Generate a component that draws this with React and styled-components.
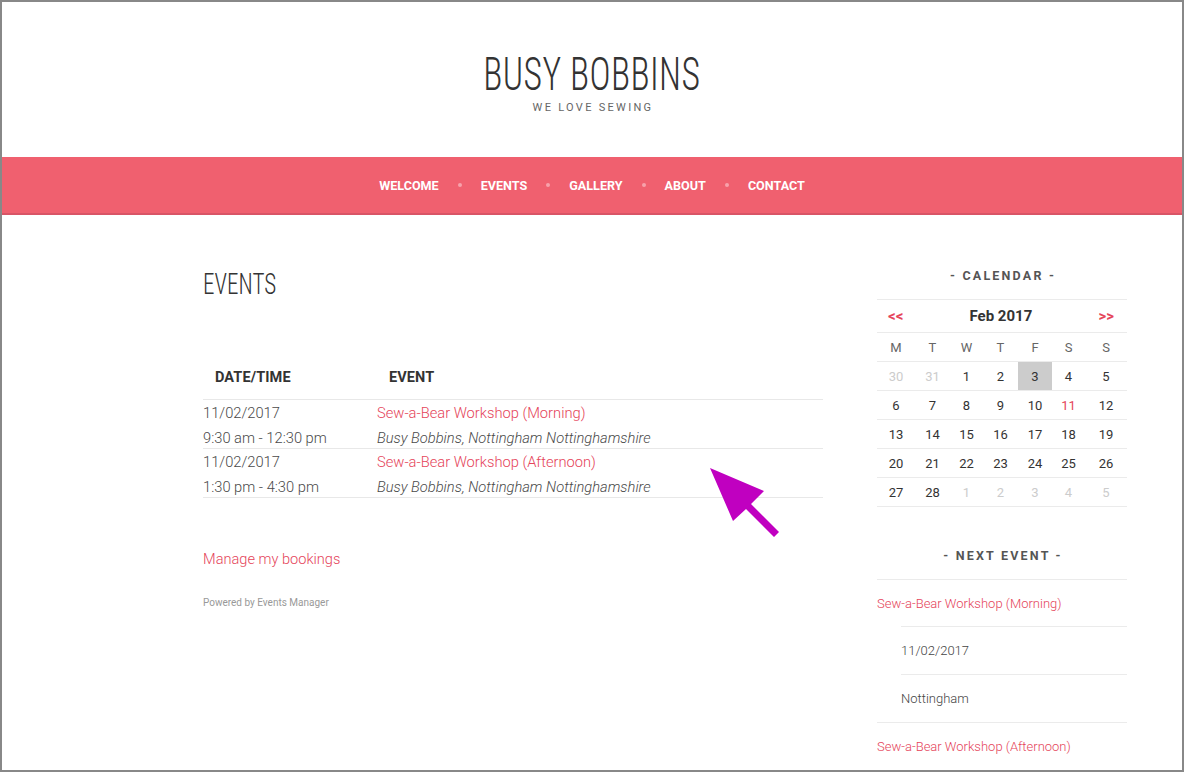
import React from "react";
import styled, { createGlobalStyle } from "styled-components";

const GlobalStyle = createGlobalStyle`
  html, body { margin: 0; padding: 0; background: #fff; }
  body { font-family: Roboto, "Liberation Sans", sans-serif; color: #444; }
  * { box-sizing: border-box; }
`;

const LINK = "#e5445a";

const Frame = styled.div`
  position: relative;
  width: 1184px;
  height: 772px;
  border: 2px solid #888;
  overflow: hidden;
  background: #fff;
`;

const Header = styled.header`
  padding-top: 49px;
  text-align: center;
`;

const SiteTitle = styled.h1`
  display: inline-block;
  margin: 0;
  font-family: "Roboto Condensed", "Liberation Sans Narrow", "DejaVu Sans Condensed", sans-serif;
  font-weight: 300;
  font-size: 46px;
  line-height: 46px;
  color: #333;
  letter-spacing: 0.5px;
  transform: scaleX(0.776);
  transform-origin: center;
`;

const Tagline = styled.div`
  margin-top: 4px;
  font-size: 11px;
  line-height: 14px;
  letter-spacing: 2.3px;
  padding-left: 2px;
  color: #666;
  font-weight: 400;
`;

const Nav = styled.nav`
  margin-top: 42px;
  height: 58px;
  background: #f0606f;
  border-bottom: 2px solid #d95566;
  display: flex;
  justify-content: center;
  align-items: center;
`;

const NavLink = styled.a`
  color: #fff;
  font-weight: 700;
  font-size: 12.6px;
  text-transform: uppercase;
  text-decoration: none;
`;

const NavDot = styled.span`
  width: 4px;
  height: 4px;
  border-radius: 50%;
  background: #f7a1ab;
  margin: 0 19px;
`;

const Main = styled.div`
  display: flex;
  align-items: flex-start;
  padding-left: 201px;
  gap: 54px;
`;

const Content = styled.main`
  width: 620px;
  padding-top: 54px;
`;

const PageTitle = styled.h2`
  display: inline-block;
  margin: 0;
  font-family: "Roboto Condensed", "Liberation Sans Narrow", "DejaVu Sans Condensed", sans-serif;
  font-weight: 300;
  font-size: 30px;
  line-height: 30px;
  color: #333;
  transform: scaleX(0.77);
  transform-origin: left center;
`;

const Table = styled.div`
  margin-top: 53px;
`;

const Row = styled.div`
  display: grid;
  grid-template-columns: 174px 1fr;
  border-bottom: 1px solid #e8e8e8;
`;

const HeadCell = styled.div`
  padding: 15px 12px 10px;
  font-size: 14.5px;
  line-height: 22px;
  font-weight: 700;
  color: #333;
  text-transform: uppercase;
  letter-spacing: 0.1px;
`;

const Cell = styled.div`
  height: 48px;
  padding-top: 1px;
  font-size: 14.7px;
  line-height: 25px;
  font-weight: 300;
  color: #4a4a4a;
`;

const Line = styled.div`
  font-style: ${(p) => (p.$italic ? "italic" : "normal")};
  white-space: nowrap;
`;

const Link = styled.a`
  color: ${LINK};
  text-decoration: none;
`;

const Manage = styled.p`
  margin: 49px 0 0;
  font-size: 14.6px;
  line-height: 24px;
  font-weight: 300;
`;

const Powered = styled.p`
  margin: 24px 0 0;
  font-size: 10px;
  line-height: 16px;
  color: #999;
  font-weight: 400;
`;

const Sidebar = styled.aside`
  width: 250px;
  padding-top: 51px;
`;

const WidgetTitle = styled.h3`
  margin: ${(p) => p.$top || 0}px 0 13px;
  padding-left: 2px;
  text-align: center;
  font-size: 12.5px;
  line-height: 20px;
  letter-spacing: 2.2px;
  font-weight: 700;
  color: #555;
  text-transform: uppercase;
`;

const Cal = styled.div`
  border-top: 1px solid #ebebeb;
`;

const CalRow = styled.div`
  display: grid;
  grid-template-columns: 38px 35px 33px 35px 34px 33px 42px;
  border-bottom: 1px solid #ebebeb;
  height: 29px;
`;

const CalHead = styled.div`
  display: flex;
  align-items: center;
  justify-content: space-between;
  height: 33px;
  padding: 0 13px 0 11px;
  border-bottom: 1px solid #ebebeb;
`;

const CalNav = styled.a`
  color: ${LINK};
  font-weight: 700;
  font-size: 15px;
  text-decoration: none;
`;

const Month = styled.div`
  font-weight: 700;
  font-size: 15px;
  color: #333;
`;

const Day = styled.div`
  display: flex;
  align-items: center;
  justify-content: center;
  font-size: 13px;
  font-weight: 400;
  color: ${(p) => (p.$faded ? "#ccc" : p.$link ? LINK : p.$wd ? "#666" : "#333")};
  background: ${(p) => (p.$today ? "#ccc" : "transparent")};
`;

const List = styled.ul`
  list-style: none;
  margin: 0;
  padding: 0;
`;

const Item = styled.li`
  border-top: 1px solid #ebebeb;
  margin-left: ${(p) => (p.$sub ? 24 : 0)}px;
  height: ${(p) => p.$h || 48}px;
  display: flex;
  align-items: center;
  font-size: 13px;
  font-weight: 300;
  color: #444;
`;

const Arrow = styled.svg`
  position: absolute;
  left: 698px;
  top: 457px;
`;

const weeks = [
  [[30, "f"], [31, "f"], [1], [2], [3, "t"], [4], [5]],
  [[6], [7], [8], [9], [10], [11, "l"], [12]],
  [[13], [14], [15], [16], [17], [18], [19]],
  [[20], [21], [22], [23], [24], [25], [26]],
  [[27], [28], [1, "f"], [2, "f"], [3, "f"], [4, "f"], [5, "f"]],
];

const nav = ["Welcome", "Events", "Gallery", "About", "Contact"];

export default function App() {
  return (
    <>
      <GlobalStyle />
      <Frame>
        <Header>
          <SiteTitle>BUSY BOBBINS</SiteTitle>
          <Tagline>WE LOVE SEWING</Tagline>
        </Header>
        <Nav>
          {nav.map((n, i) => (
            <React.Fragment key={n}>
              {i > 0 && <NavDot />}
              <NavLink href="#">{n}</NavLink>
            </React.Fragment>
          ))}
        </Nav>
        <Main>
          <Content>
            <PageTitle>EVENTS</PageTitle>
            <Table>
              <Row>
                <HeadCell>Date/Time</HeadCell>
                <HeadCell>Event</HeadCell>
              </Row>
              <Row>
                <Cell>
                  <Line>11/02/2017</Line>
                  <Line>9:30 am - 12:30 pm</Line>
                </Cell>
                <Cell>
                  <Line><Link href="#">Sew-a-Bear Workshop (Morning)</Link></Line>
                  <Line $italic>Busy Bobbins, Nottingham Nottinghamshire</Line>
                </Cell>
              </Row>
              <Row>
                <Cell>
                  <Line>11/02/2017</Line>
                  <Line>1:30 pm - 4:30 pm</Line>
                </Cell>
                <Cell>
                  <Line><Link href="#">Sew-a-Bear Workshop (Afternoon)</Link></Line>
                  <Line $italic>Busy Bobbins, Nottingham Nottinghamshire</Line>
                </Cell>
              </Row>
            </Table>
            <Manage><Link href="#">Manage my bookings</Link></Manage>
            <Powered>Powered by Events Manager</Powered>
          </Content>
          <Sidebar>
            <WidgetTitle>- Calendar -</WidgetTitle>
            <Cal>
              <CalHead>
                <CalNav href="#">&lt;&lt;</CalNav>
                <Month>Feb 2017</Month>
                <CalNav href="#">&gt;&gt;</CalNav>
              </CalHead>
              <CalRow>
                {["M", "T", "W", "T", "F", "S", "S"].map((d, i) => (
                  <Day key={i} $wd>{d}</Day>
                ))}
              </CalRow>
              {weeks.map((w, wi) => (
                <CalRow key={wi}>
                  {w.map(([n, k], di) => (
                    <Day key={di} $faded={k === "f"} $today={k === "t"} $link={k === "l"}>
                      {n}
                    </Day>
                  ))}
                </CalRow>
              ))}
            </Cal>
            <WidgetTitle $top={39}>- Next Event -</WidgetTitle>
            <List>
              <Item $h={47}><Link href="#">Sew-a-Bear Workshop (Morning)</Link></Item>
              <Item $sub>11/02/2017</Item>
              <Item $sub>Nottingham</Item>
              <Item><Link href="#">Sew-a-Bear Workshop (Afternoon)</Link></Item>
            </List>
          </Sidebar>
        </Main>
        <Arrow width="90" height="90" viewBox="0 0 90 90">
          <path
            d="M10 9 L64 32 L51 45 L79 73 L74 78 L46 50 L33 62 Z"
            fill="#c000c0"
          />
        </Arrow>
      </Frame>
    </>
  );
}
